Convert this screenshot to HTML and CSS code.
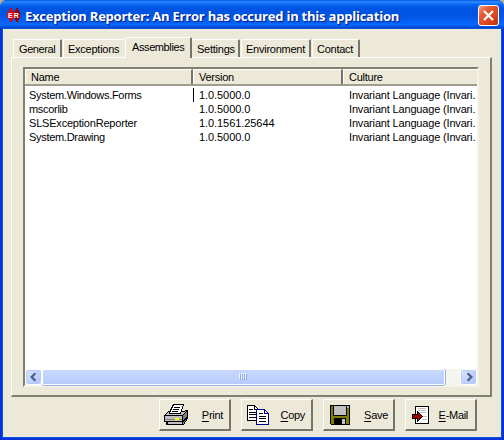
FILE: index.html
```
<!DOCTYPE html>
<html lang="en">
<head>
<meta charset="utf-8">
<title>Exception Reporter</title>
<link rel="stylesheet" href="styles.css">
</head>
<body>
<div class="window">
  <header class="titlebar">
    <svg class="app-icon" width="14" height="16" viewBox="0 0 14 16">
      <path fill="#f00000" d="M3 1h2v2h1v2h1v6H6v2H5v2H3v-2H2v-2H0V5h2V3h1z"/>
      <path fill="#a00000" d="M9 1h2v2h1v2h1v6h-1v2h-1v2H9v-2H8v-2H7V5h1V3h1z"/>
      <text x="1" y="10.500">E</text><text x="6.800" y="10.500">R</text>
    </svg>
    <h1>Exception Reporter: An Error has occured in this application</h1>
    <button class="close" aria-label="Close">
      <svg width="17" height="17" viewBox="0 0 17 17"><path d="M4 4l9 9M13 4l-9 9" stroke="#fff" stroke-width="2.200"/></svg>
    </button>
  </header>
  <main class="client">
    <nav class="tabs">
      <div class="tab general"><span>General</span></div>
      <div class="tab exceptions"><span>Exceptions</span></div>
      <div class="tab assemblies active"><span>Assemblies</span></div>
      <div class="tab settings"><span>Settings</span></div>
      <div class="tab environment"><span>Environment</span></div>
      <div class="tab contact"><span>Contact</span></div>
    </nav>
    <section class="panel">
      <div class="list">
        <div class="row head"><div>Name</div><div>Version</div><div>Culture</div></div>
        <div class="rows">
          <div class="row first"><div>System.Windows.Forms</div><div class="ver">1.0.5000.0</div><div class="culture">Invariant Language (Invari.</div></div>
          <div class="row"><div>mscorlib</div><div class="ver">1.0.5000.0</div><div class="culture">Invariant Language (Invari.</div></div>
          <div class="row"><div class="wide">SLSExceptionReporter</div><div class="ver">1.0.1561.25644</div><div class="culture">Invariant Language (Invari.</div></div>
          <div class="row"><div>System.Drawing</div><div class="ver">1.0.5000.0</div><div class="culture">Invariant Language (Invari.</div></div>
        </div>
        <div class="scrollbar">
          <div class="arrow"><svg width="14" height="14" viewBox="0 0 15 15"><path d="M9 3.500L5 7.500l4 4" fill="none" stroke="#4d6185" stroke-width="2.500"/></svg></div>
          <div class="thumb"><i></i><i></i><i></i><i></i></div>
          <div class="arrow right"><svg width="14" height="14" viewBox="0 0 15 15"><path d="M6 3.500l4 4-4 4" fill="none" stroke="#4d6185" stroke-width="2.500"/></svg></div>
        </div>
      </div>
    </section>
    <footer class="actions">
      <button class="action print">
        <svg width="26" height="24" viewBox="0 0 26 24" shape-rendering="crispEdges">
          <path d="M1.500 12.500l4-4h15l4-1v8l-4 6h-17v-3h-2z" fill="#808080" stroke="#000"/>
          <path d="M2 12l4-3h14l3-1-4 4z" fill="#c0c0c0"/>
          <path d="M2 13h17v5H2z" fill="#c0c0c0"/>
          <path d="M2 16.500h17" stroke="#808080"/>
          <path d="M1 12.500h18.500v6H3M19.500 12.500l5-5M20 18.500l4-4" fill="none" stroke="#000"/>
          <path d="M6.500 9.500L10.500 1.500h10L17.500 10.500h-11z" fill="#fff" stroke="#000"/>
          <path d="M11 4.500h6M10 6.500h6M9 8.500h6" stroke="#000"/>
          <path d="M12 15h4v2h-4z" fill="#ff0"/>
          <path d="M3.500 18.500h17l-2 3h-13z" fill="#c0c0c0" stroke="#000"/>
        </svg>
        <span><u>P</u>rint</span>
      </button>
      <button class="action copy">
        <svg width="24" height="24" viewBox="0 0 24 24" shape-rendering="crispEdges">
          <path d="M1.500 2.500h7l4 4v11h-11z" fill="#fff" stroke="#000"/>
          <path d="M8.500 2.500v4h4M3 6.500h4M3 9.500h7M3 11.500h7M3 14.500h7" fill="none" stroke="#000"/>
          <path d="M10.500 6.500h8l4 4v11h-12z" fill="#fff" stroke="#000080"/>
          <path d="M18.500 6.500v4h4" fill="none" stroke="#000080"/>
          <path d="M13 10.500h4M13 13.500h7M13 15.500h7M13 18.500h7" stroke="#000"/>
        </svg>
        <span><u>C</u>opy</span>
      </button>
      <button class="action save">
        <svg width="22" height="22" viewBox="0 0 22 22" shape-rendering="crispEdges">
          <path d="M1.500 1.500h19v19h-18l-1-1z" fill="#808000" stroke="#000"/>
          <path d="M4.500 1.500h13v10h-13z" fill="#c0c0c0" stroke="#000"/>
          <path d="M18 2h2v2h-2z" fill="#c0c0c0"/>
          <path d="M5 14h12v7H5z" fill="#000"/><path d="M13 15h3v5h-3z" fill="#c0c0c0"/>
        </svg>
        <span><u>S</u>ave</span>
      </button>
      <button class="action mail">
        <svg width="20" height="22" viewBox="0 0 20 22" shape-rendering="crispEdges">
          <path d="M4.500 2.500h13v17h-13z" fill="#fff" stroke="#000"/>
          <path d="M7 4.500h8M7 6.500h8M7 8.500h8M12 12.500h4M11 15.500h5" stroke="#c0c0c0"/>
          <path d="M1.500 10.500h5v-3l5 5-5 5v-3h-5z" fill="#a00000" stroke="#000"/>
        </svg>
        <span><u>E</u>-Mail</span>
      </button>
    </footer>
  </main>
</div>
</body>
</html>
```

FILE: styles.css
```
* { box-sizing: border-box; }
body {
  margin: 0;
  background: #b5b09a;
  color: #000;
  font: 11px/14px "Liberation Sans", Arial, sans-serif;
  overflow: hidden;
}
button { font: inherit; color: inherit; padding: 0; border: 0; }
.window {
  width: 504px;
  height: 440px;
  display: flex;
  flex-direction: column;
  border-radius: 7px 7px 0 0;
  overflow: hidden;
  background: #0831d9;
}
.titlebar {
  height: 29px;
  flex: none;
  display: flex;
  align-items: center;
  padding: 2px 5px 0 7px;
  background: linear-gradient(#0058e6 0, #2f8bff 2px, #0c6cf5 4px, #0054e3 8px, #0054e3 15px, #0562f5 22px, #0668ff 25px, #004fd6 27px, #0038b8 29px);
}
.app-icon { margin: -2px 4px 0 0; flex: none; }
.app-icon text { font: bold 7px "Liberation Sans", sans-serif; fill: #fff; }
h1 {
  flex: 1;
  margin: 0;
  color: #fff;
  font: bold 13px/20px "Open Sans", sans-serif;
  letter-spacing: -0.22px;
  text-shadow: 1px 1px 1px #0a1883;
  white-space: nowrap;
}
.close {
  width: 21px;
  height: 21px;
  display: grid;
  place-items: center;
  border: 1px solid #fff;
  border-radius: 3px;
  background: linear-gradient(135deg, #f0a085, #e45b35 30%, #d9441a 70%, #b7320e);
}
.client {
  flex: 1;
  margin: 0 3px 3px;
  padding: 8px 9px 0 8px;
  background: #ece9d8;
  box-shadow: 0 0 0 1px #0855dd;
}
.tabs { display: flex; align-items: flex-end; height: 21px; padding-left: 2px; position: relative; }
.tab {
  height: 18px;
  margin-bottom: 1px;
  padding: 2px 0 0 6px;
  border: 1px solid #fff;
  border-right: 2px solid #77756a;
  border-bottom: 0;
  border-radius: 2px 2px 0 0;
  white-space: nowrap;
  letter-spacing: -.25px;
}
.general { width: 49px; padding-left: 5px; letter-spacing: -.4px; }
.exceptions { width: 62px; border-right: 0; margin-left: 1px; padding-left: 4px; }
.assemblies { width: 67px; letter-spacing: -.4px; }
.settings { width: 48px; border-left: 0; padding-left: 5px; }
.environment { width: 70px; margin-left: 1px; padding-left: 4px; }
.contact { width: 48px; margin-left: 1px; padding-left: 4px; }
.active { height: 21px; margin-bottom: 0; background: #ece9d8; }
.panel {
  height: 340px;
  margin-top: -1px;
  padding: 9px 11px 8px;
  border: 1px solid #fff;
  border-right: 2px solid #817f72;
  border-bottom: 2px solid #817f72;
}
.list {
  height: 320px;
  display: flex;
  flex-direction: column;
  background: #fff;
  border: 2px solid #716f64;
  border-top-color: #817f72;
  border-left-color: #817f72;
  border-right: 2px solid #f5f3ea;
  border-bottom: 2px solid #f5f3ea;
}
.row { display: grid; grid-template-columns: 168px 150px 1fr; height: 14px; white-space: nowrap; letter-spacing: -.3px; }
.row > div { padding-left: 6px; }
.row > div:first-child { padding-left: 4px; }
.row > .wide { letter-spacing: -.2px; }
.row > .ver { letter-spacing: -.07px; }
.row > .culture { letter-spacing: -.17px; }
.head { height: 17px; background: #ece9d8; border-bottom: 2px solid #a09d8e; flex: none; letter-spacing: -.25px; }
.head > div { border-left: 1px solid #fff; border-top: 1px solid #fff; border-right: 2px solid #77756a; padding-left: 5px; }
.head > div:first-child { padding-left: 5px; }
.head > div:last-child { border-right: 0; }
.rows { flex: 1; padding-top: 2px; }
.first > div:nth-child(2) { box-shadow: inset 1px 0 #000; }
.scrollbar { display: flex; height: 16px; background: #f5f5f0; flex: none; }
.arrow {
  width: 17px;
  height: 16px;
  display: grid;
  place-items: center;
  flex: none;
  border: 1px solid #fff;
  border-radius: 3px;
  background: linear-gradient(135deg, #dce6ff, #bcd0fd 60%, #b1c7f9);
  box-shadow: inset 0 0 0 1px #b8cbf6;
}
.right { margin-left: auto; }
.thumb {
  width: 403px;
  height: 16px;
  display: flex;
  justify-content: center;
  align-items: center;
  gap: 1px;
  border: 1px solid #fff;
  border-radius: 2px;
  background: linear-gradient(#c9d8fc, #bed1fd 60%, #b6cbfa);
  box-shadow: 0 1px #98b1e4, 1px 0 #98b1e4;
}
.thumb i { width: 1px; height: 6px; background: #8caae6; box-shadow: -1px -1px #eef4fe; }
.actions { display: flex; justify-content: flex-end; gap: 10px; padding: 2px 15px 0 0; }
.action {
  width: 72px;
  height: 32px;
  display: flex;
  align-items: center;
  background: #ece9d8;
  border: 1px solid #fff;
  border-right: 2px solid #77756a;
  border-bottom: 2px solid #77756a;
  letter-spacing: -.3px;
}
.action svg { flex: none; margin-top: 1px; }
.action span { margin-left: auto; white-space: nowrap; }
.action u { text-underline-offset: 2px; text-decoration-thickness: 1px; text-decoration-skip-ink: none; }
.print { padding: 0 6px 0 3px; }
.copy { padding: 0 6px 0 4px; }
.save { padding: 0 5px 0 5px; }
.mail { padding: 0 7px 0 5px; }
```
